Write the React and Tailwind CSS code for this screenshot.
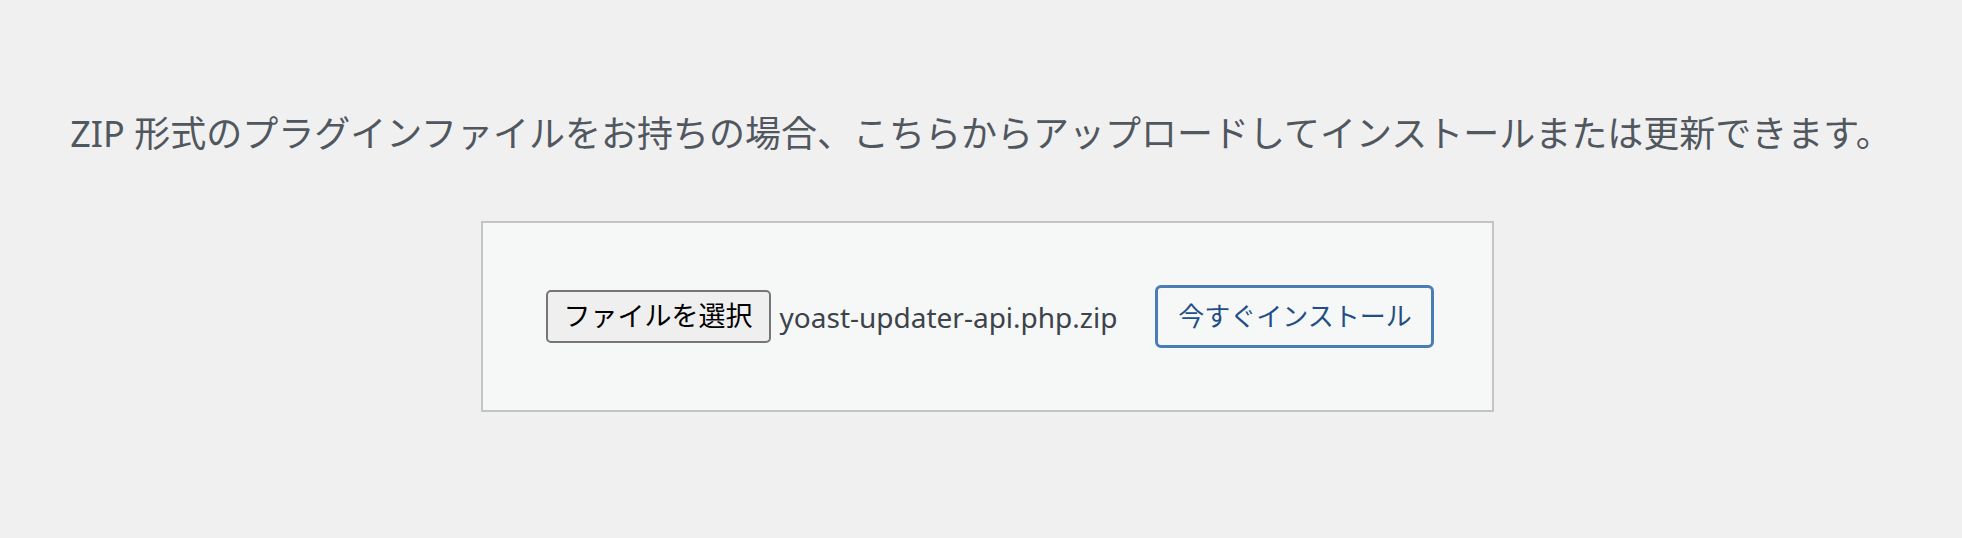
export default function App() {
  return (
    <div
      className="min-h-[538px] w-full bg-[#f0f0f1] pt-[112px]"
      style={{ fontFamily: '"Noto Sans", "Noto Sans CJK JP", sans-serif' }}
    >
      <p className="text-center text-[36px] leading-[44px] text-[#50575e]">
        ZIP 形式のプラグインファイルをお持ちの場合、こちらからアップロードしてインストールまたは更新できます。
      </p>
      <div className="mt-[65px] flex justify-center pl-[12px]">
        <form className="flex h-[191px] w-[1013px] items-center justify-center border-2 border-[#c3c4c7] bg-[#f6f7f7] pl-[6px]">
          <button
            type="button"
            className="flex h-[53px] w-[225px] items-center justify-center rounded-[5px] border-2 border-[#767676] bg-[#efefef] text-[27px] text-black"
          >
            ファイルを選択
          </button>
          <span className="ml-[9px] text-[28px] text-[#3c434a]">yoast-updater-api.php.zip</span>
          <button
            type="button"
            className="ml-[38px] flex h-[63px] w-[279px] items-center justify-center rounded-[6px] border-[3px] border-[#4a7db6] bg-[#f6f7f7] text-[26px] text-[#1f4f86]"
          >
            今すぐインストール
          </button>
        </form>
      </div>
    </div>
  )
}
